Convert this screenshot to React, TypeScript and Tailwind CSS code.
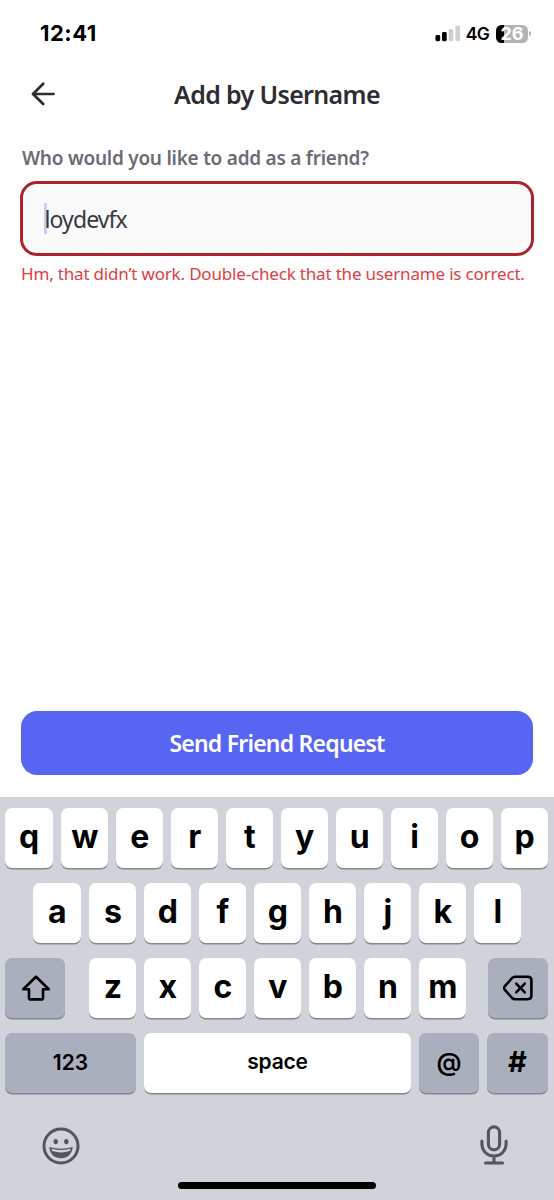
import type { ReactNode } from 'react';
import { clsx } from 'clsx';

const ROW_ONE = ['q', 'w', 'e', 'r', 't', 'y', 'u', 'i', 'o', 'p'];
const ROW_TWO = ['a', 's', 'd', 'f', 'g', 'h', 'j', 'k', 'l'];
const ROW_THREE = ['z', 'x', 'c', 'v', 'b', 'n', 'm'];

interface KeyProps {
  children: ReactNode;
  label?: string;
  dark?: boolean;
  className?: string;
}

function Key({ children, label, dark = false, className }: KeyProps) {
  return (
    <button
      type="button"
      aria-label={label}
      className={clsx(
        'flex h-[60px] items-center justify-center rounded-[7px] text-black shadow-[0_1.5px_0_#85878c]',
        dark ? 'bg-[#a9afbc]' : 'bg-white',
        className,
      )}
    >
      {children}
    </button>
  );
}

function LetterKey({ letter, wide = false }: { letter: string; wide?: boolean }) {
  return (
    <Key className={clsx('pb-[3px]', wide ? 'w-[48.4px]' : 'w-[47px]')}>
      <span className="text-[32px] leading-10 font-bold">{letter}</span>
    </Key>
  );
}

function StatusBar() {
  return (
    <div className="flex h-[67px] items-center justify-between pr-[23px] pl-[40px] font-['Inter',sans-serif] text-black">
      <span className="pb-px text-[22px] leading-7 font-bold tracking-[0.5px]">12:41</span>
      <div className="flex items-center">
        <svg width="26" height="17" viewBox="0 0 26 17">
          <rect x="0.5" y="10" width="4.7" height="6.2" rx="1.4" fill="#000" />
          <rect x="7" y="7" width="4.7" height="9.2" rx="1.4" fill="#000" />
          <rect x="13.6" y="4" width="4.7" height="12.2" rx="1.4" fill="#d0d0d0" />
          <rect x="20.4" y="0.5" width="4.7" height="15.7" rx="1.4" fill="#d0d0d0" />
        </svg>
        <span className="ml-[5px] text-[17.5px] leading-5 font-semibold tracking-[-0.8px]">4G</span>
        <div className="ml-[7px] flex h-[18px] w-[32px] items-center justify-center rounded-[5.5px] bg-[linear-gradient(90deg,#000_8px,#b3b3b3_8px)]">
          <span className="text-[18px] leading-[18px] font-bold text-white">26</span>
        </div>
        <div className="ml-[1px] h-[5px] w-[2px] rounded-r-full bg-[#b3b3b3]" />
      </div>
    </div>
  );
}

function BackIcon() {
  return (
    <svg width="24" height="24" viewBox="0 0 24 24" fill="none" stroke="#2b2d31" strokeWidth="2.7" strokeLinecap="round" strokeLinejoin="round">
      <path d="M12.2 1.8 2 12l10.2 10M2.3 12h20.2" />
    </svg>
  );
}

function ShiftIcon() {
  return (
    <svg width="30" height="26" viewBox="0 0 30 26" fill="none" stroke="#000" strokeWidth="2.6" strokeLinejoin="round">
      <path d="M15 1.8 27.8 14.3H22v8.6q0 1.5-1.5 1.5h-11Q8 24.4 8 22.9v-8.6H2.2Z" />
    </svg>
  );
}

function BackspaceIcon() {
  return (
    <svg width="30" height="26" viewBox="0 0 30 26" fill="none" stroke="#000" strokeWidth="2.6" strokeLinecap="round" strokeLinejoin="round">
      <path d="M12 1.8h12.8q3.6 0 3.6 3.6v15.2q0 3.6-3.6 3.6H12q-1.7 0-2.9-1.2L1.7 14.7q-1.6-1.7 0-3.4L9.1 3q1.2-1.2 2.9-1.2Z" />
      <path d="m13.2 8.7 8.6 8.6M21.8 8.7l-8.6 8.6" />
    </svg>
  );
}

function EmojiIcon() {
  return (
    <svg width="38" height="38" viewBox="0 0 38 38" fill="none">
      <circle cx="19" cy="19" r="17" stroke="#54565d" strokeWidth="3" />
      <ellipse cx="13.7" cy="14.6" rx="2.2" ry="2.7" fill="#54565d" />
      <ellipse cx="24.3" cy="14.6" rx="2.2" ry="2.7" fill="#54565d" />
      <path d="M7.3 20Q19 23.6 30.7 20C30.3 27.3 25 31.3 19 31.3S7.700 27.3 7.3 20Z" fill="#54565d" />
      <path d="M9.3 21.7Q19 24.5 28.7 21.700L27.7 24.1Q19 27 10.3 24.1Z" fill="#d1d3da" />
    </svg>
  );
}

function MicIcon() {
  return (
    <svg width="28" height="40" viewBox="0 0 28 40" fill="none" stroke="#54565d" strokeWidth="3.1" strokeLinecap="round">
      <rect x="8.4" y="1.9" width="11.2" height="23" rx="5.6" />
      <path d="M1.9 16v2.5c0 7.4 5 12.5 12.1 12.5s12.1-5.1 12.1-12.5V16M14 31.5V38M5.5 38h17" />
    </svg>
  );
}

function Keyboard() {
  return (
    <div className="flex h-[403px] flex-col bg-[#d1d3da] pt-[11px] pr-[6px] pl-[5px] font-['Inter',sans-serif]">
      <div className="flex flex-col gap-[15px]">
        <div className="flex gap-2">
          {ROW_ONE.map((letter, index) => (
            <LetterKey key={letter} letter={letter} wide={index === 0} />
          ))}
        </div>
        <div className="flex gap-2 pl-[28px]">
          {ROW_TWO.map((letter, index) => (
            <LetterKey key={letter} letter={letter} wide={index === 0} />
          ))}
        </div>
        <div className="flex">
          <Key dark label="Shift" className="w-[60.4px] pl-px">
            <ShiftIcon />
          </Key>
          <div className="ml-6 flex gap-2">
            {ROW_THREE.map((letter) => (
              <LetterKey key={letter} letter={letter} />
            ))}
          </div>
          <Key dark label="Delete" className="ml-auto w-[60px]">
            <BackspaceIcon />
          </Key>
        </div>
        <div className="flex gap-2">
          <Key dark className="w-[131px]">
            <span className="text-[21px] leading-7 font-semibold">123</span>
          </Key>
          <Key className="flex-1 pb-[2px]">
            <span className="text-[21px] leading-7 font-semibold tracking-[-0.2px]">space</span>
          </Key>
          <Key dark className="w-[60px] pb-[2px]">
            <span className="text-[25px] leading-7 font-semibold">@</span>
          </Key>
          <Key dark className="w-[61px] pb-[2px]">
            <span className="text-[29px] leading-7 font-bold">#</span>
          </Key>
        </div>
      </div>
      <div className="mt-[32px] flex items-center justify-between pr-[40.5px] pl-[36.5px]">
        <div className="pt-[2px]">
          <EmojiIcon />
        </div>
        <MicIcon />
      </div>
      <div className="mx-auto mt-auto mb-[11px] h-[7px] w-[198px] rounded-full bg-black" />
    </div>
  );
}

export default function App() {
  return (
    <main className="flex h-[1200px] w-[554px] flex-col overflow-hidden bg-white font-['Noto_Sans',sans-serif]">
      <StatusBar />
      <header className="grid h-[54px] grid-cols-[60px_1fr_60px] items-center">
        <button type="button" aria-label="Back" className="pb-px pl-[31px]">
          <BackIcon />
        </button>
        <h1 className="text-center text-[25px] leading-8 font-semibold tracking-[-0.65px] whitespace-nowrap text-[#2b2d31]">
          Add by Username
        </h1>
      </header>
      <section className="flex flex-col px-[21px] pt-[24px]">
        <label htmlFor="username" className="pl-px text-[19px] leading-[26px] font-semibold tracking-[-0.25px] whitespace-nowrap text-[#6a6c76]">
          Who would you like to add as a friend?
        </label>
        <div className="-mx-px mt-[10px] flex h-[75px] items-center rounded-[17px] border-[3px] border-[#ac2231] bg-[#fafafa] pl-[21px]">
          <span className="h-[31px] w-[2.5px] bg-[#c5cdfa]" />
          <span id="username" className="-ml-[2px] text-[23px] leading-8 tracking-[-0.9px] text-[#37393e]">
            loydevfx
          </span>
        </div>
        <p className="mt-[6px] text-[17px] leading-6 tracking-[-0.18px] whitespace-nowrap text-[#de3e45]">
          Hm, that didn’t work. Double-check that the username is correct.
        </p>
      </section>
      <div className="mt-auto px-[21px] pb-[22px]">
        <button
          type="button"
          className="flex h-[64px] w-full items-center justify-center rounded-[16px] bg-[#5865f2] text-[23px] leading-8 font-semibold tracking-[-0.78px] text-white"
        >
          Send Friend Request
        </button>
      </div>
      <Keyboard />
    </main>
  );
}
